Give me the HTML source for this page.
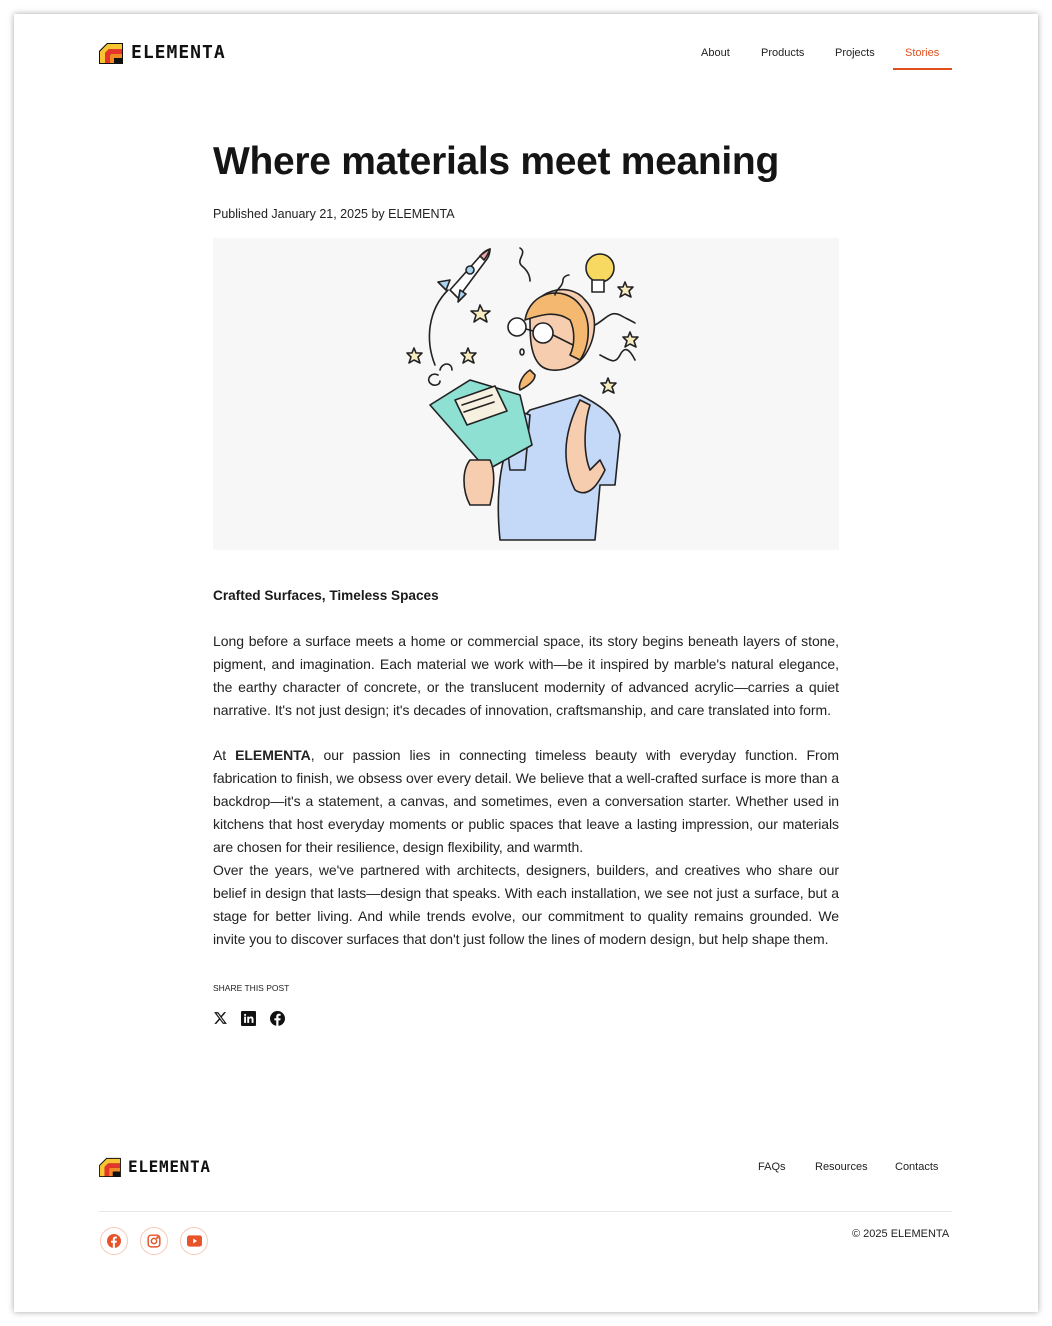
<!DOCTYPE html>
<html><head><meta charset="utf-8"><style>
*{margin:0;padding:0;box-sizing:border-box}
body{width:1052px;height:1326px;background:#fff;font-family:"Liberation Sans",sans-serif;color:#1a1a1a;position:relative;overflow:hidden}
.card{position:absolute;left:14px;top:14px;width:1024px;height:1298px;background:#fff;box-shadow:0 0 6px rgba(0,0,0,.35)}
.abs{position:absolute}
.nav a{position:absolute;font-size:11px;color:#222;text-decoration:none;top:47px}
.logotxt{font-family:"DejaVu Sans Mono","Liberation Mono",monospace;font-weight:bold;color:#111}
p.b{position:absolute;left:213px;width:626px;font-size:14px;letter-spacing:-0.05px;line-height:23px;text-align:justify;color:#222}
.fl{position:absolute;font-size:11px;color:#222;top:1161px}
.soc{position:absolute;top:1227px;width:28px;height:28px;border:1px solid #f6c9b8;border-radius:50%}
</style></head><body>
<div class="card"></div>
<svg class="abs" style="left:99px;top:42px" width="24" height="22" viewBox="0 0 24 22">
<path d="M0 22V9L8 1h16v21z" fill="#111"/>
<path d="M1 21V9.5L8.5 2H23v5H10L6 11v10z" fill="#f7c531"/>
<path d="M6 21V11l4-4h13v5H12l-1 1v8z" fill="#e5352a"/>
<path d="M11 21v-8l1-1h11v4h-8v5z" fill="#f08a24"/>
<rect x="16" y="16" width="7" height="5" fill="#111"/>
</svg>
<div class="abs logotxt" style="left:131px;top:42px;font-size:18px;letter-spacing:1px">ELEMENTA</div>
<div class="nav">
<a style="left:701px">About</a><a style="left:761px">Products</a><a style="left:835px">Projects</a><a style="left:905px;color:#e0501e">Stories</a>
</div>
<div class="abs" style="left:893px;top:68px;width:59px;height:2px;background:#e0501e"></div>
<h1 class="abs" style="left:213px;top:140px;font-size:39px;font-weight:bold;letter-spacing:-0.3px;color:#151515;white-space:nowrap">Where materials meet meaning</h1>
<div class="abs" style="left:213px;top:207px;font-size:12.5px;color:#222">Published January 21, 2025 by ELEMENTA</div>
<div class="abs" style="left:213px;top:238px;width:626px;height:312px;background:#f7f7f7"></div>
<svg class="abs" style="left:400px;top:240px" width="260" height="310" viewBox="0 0 260 310" fill="none" stroke="#222" stroke-width="1.6" stroke-linejoin="round" stroke-linecap="round">
<path d="M48 50C28 70 25 100 35 125"/>
<path d="M38 135c-6-3-12 3-8 8 4 4 10 2 10-2M40 130c2-8 12-8 12 0"/>
<path d="M50 50L82 14c4-4 8-5 8-5s0 6-3 10L58 58z" fill="#fff"/>
<path d="M80 16c4-4 8-6 10-7-1 3-3 7-6 11z" fill="#f4a7a7"/>
<circle cx="70" cy="30" r="4" fill="#a9d3f0"/>
<path d="M50 40l-12 2 8 8zM60 50l-2 12 8-8z" fill="#a9d3f0"/>
<path d="M100 300c-5-50 0-100 30-130l50-15c20 10 35 20 40 40l-5 50-15 0-5 55z" fill="#c4d8f7"/>
<path d="M115 170c-8 10-8 40-5 60l15 0 5-55z" fill="#c4d8f7"/>
<path d="M180 160c-15 30-20 60-5 90 15 10 25-10 30-20l-5-10-10 10c-8-20-5-50 0-65z" fill="#f7cdb0"/>
<path d="M130 80c0-30 40-40 55-20 15 15 10 40 0 55-10 15-35 20-45 10-10-10-10-30-10-45z" fill="#f7cdb0"/>
<path d="M125 80c5-30 40-35 55-15 12 15 10 40 0 55l-10-5c5-10 5-25 0-35-15-10-30-5-45 0z" fill="#f5b870"/>
<path d="M130 130c-8 5-12 15-10 20 10-5 15-10 15-15z" fill="#f5b870"/>
<circle cx="117" cy="87" r="9" fill="#fff"/><circle cx="143" cy="93" r="10" fill="#fff"/>
<path d="M126 89l7 2M153 95l20 10"/>
<ellipse cx="122" cy="112" rx="2" ry="3"/>
<path d="M30 165l40-25 50 15 12 50-45 25z" fill="#8de0d2"/>
<path d="M55 160l40-14 12 25-40 14z" fill="#f6f0e0"/>
<path d="M62 165l30-10M64 172l30-10"/>
<path d="M70 220c-8 10-8 30 0 45l20 0c5-20 5-35 0-45z" fill="#f7cdb0"/>
<g fill="#f7ecc0">
<path d="M80 65l3 6 7 0-5 4 2 7-7-4-6 4 2-7-5-4 7 0z"/>
<path d="M14 108l2 5 6 0-4 4 2 6-6-3-5 3 2-6-4-4 5 0z"/>
<path d="M68 108l2 5 6 0-4 4 2 6-6-3-5 3 2-6-4-4 5 0z"/>
<path d="M225 42l2 5 6 0-4 4 2 6-6-3-5 3 2-6-4-4 5 0z"/>
<path d="M230 92l2 5 6 0-4 4 2 6-6-3-5 3 2-6-4-4 5 0z"/>
<path d="M208 138l2 5 6 0-4 4 2 6-6-3-5 3 2-6-4-4 5 0z"/>
</g>
<circle cx="200" cy="28" r="14" fill="#f7d860"/>
<path d="M192 40h12v12h-12z" fill="#fff"/>
<path d="M120 8c8 5-5 12 2 18 6 5 8 10 8 15M155 55c0-5 8-8 8-15 0-3 4-5 6-5M195 85c10-5 15-15 25-10 5 3 10 5 15 8M200 115c10 5 15 10 20 0 5-10 10-5 15 5"/>
</svg>
<div class="abs" style="left:213px;top:588px;font-size:13.6px;font-weight:bold">Crafted Surfaces, Timeless Spaces</div>
<p class="b" style="top:630px">Long before a surface meets a home or commercial space, its story begins beneath layers of stone, pigment, and imagination. Each material we work with—be it inspired by marble's natural elegance, the earthy character of concrete, or the translucent modernity of advanced acrylic—carries a quiet narrative. It's not just design; it's decades of innovation, craftsmanship, and care translated into form.</p>
<p class="b" style="top:744px">At <b>ELEMENTA</b>, our passion lies in connecting timeless beauty with everyday function. From fabrication to finish, we obsess over every detail. We believe that a well-crafted surface is more than a backdrop—it's a statement, a canvas, and sometimes, even a conversation starter. Whether used in kitchens that host everyday moments or public spaces that leave a lasting impression, our materials are chosen for their resilience, design flexibility, and warmth.<br>Over the years, we've partnered with architects, designers, builders, and creatives who share our belief in design that lasts—design that speaks. With each installation, we see not just a surface, but a stage for better living. And while trends evolve, our commitment to quality remains grounded. We invite you to discover surfaces that don't just follow the lines of modern design, but help shape them.</p>
<div class="abs" style="left:213px;top:983px;font-size:8.5px;color:#222">SHARE THIS POST</div>
<svg class="abs" style="left:213px;top:1011px" width="15" height="14" viewBox="0 0 24 24"><path d="M18.2 2h3.4l-7.4 8.5L23 22h-6.8l-5.3-7-6.1 7H1.4l7.9-9L1 2h7l4.8 6.4zm-1.2 18h1.9L7.1 4H5.1z" fill="#111"/></svg>
<svg class="abs" style="left:241px;top:1011px" width="15" height="15" viewBox="0 0 24 24"><rect width="24" height="24" rx="2" fill="#111"/><path d="M5 9h3v10H5zM6.5 4.5a1.7 1.7 0 110 3.4 1.7 1.7 0 010-3.4zM10 9h3v1.4c.5-.9 1.6-1.6 3.2-1.6 3 0 3.8 2 3.8 4.6V19h-3v-5c0-1.3-.3-2.4-1.7-2.4S13 12.6 13 14v5h-3z" fill="#fff"/></svg>
<svg class="abs" style="left:270px;top:1011px" width="15" height="15" viewBox="0 0 24 24"><circle cx="12" cy="12" r="12" fill="#111"/><path d="M13.5 24v-9h3l.5-3.5h-3.5V9.3c0-1 .3-1.7 1.8-1.7H17V4.5c-.3 0-1.4-.1-2.6-.1-2.6 0-4.4 1.6-4.4 4.5v2.6H7V15h3v9z" fill="#fff"/></svg>
<svg class="abs" style="left:99px;top:1157px" width="22" height="20" viewBox="0 0 24 22">
<path d="M0 22V9L8 1h16v21z" fill="#111"/>
<path d="M1 21V9.5L8.5 2H23v5H10L6 11v10z" fill="#f7c531"/>
<path d="M6 21V11l4-4h13v5H12l-1 1v8z" fill="#e5352a"/>
<path d="M11 21v-8l1-1h11v4h-8v5z" fill="#f08a24"/>
<rect x="16" y="16" width="7" height="5" fill="#111"/>
</svg>
<div class="abs logotxt" style="left:128px;top:1157px;font-size:16px;letter-spacing:0.7px">ELEMENTA</div>
<a class="fl" style="left:758px">FAQs</a><a class="fl" style="left:815px">Resources</a><a class="fl" style="left:895px">Contacts</a>
<div class="abs" style="left:99px;top:1211px;width:853px;height:1px;background:#e6e6e6"></div>
<div class="soc" style="left:100px"><svg style="position:absolute;left:6px;top:6px" width="14" height="14" viewBox="0 0 24 24"><circle cx="12" cy="12" r="12" fill="#e8532a"/><path d="M13.5 24v-9h3l.5-3.5h-3.5V9.3c0-1 .3-1.7 1.8-1.7H17V4.5c-.3 0-1.4-.1-2.6-.1-2.6 0-4.4 1.6-4.4 4.5v2.6H7V15h3v9z" fill="#fff"/></svg></div>
<div class="soc" style="left:140px"><svg style="position:absolute;left:6px;top:6px" width="14" height="14" viewBox="0 0 24 24" fill="none" stroke="#e8532a" stroke-width="2.5"><rect x="2" y="2" width="20" height="20" rx="5"/><circle cx="12" cy="12" r="4.5"/><circle cx="18" cy="6" r="1" fill="#e8532a"/></svg></div>
<div class="soc" style="left:180px"><svg style="position:absolute;left:6px;top:7px" width="15" height="12" viewBox="0 0 24 18"><rect width="24" height="18" rx="4" fill="#e8532a"/><path d="M10 5l6 4-6 4z" fill="#fff"/></svg></div>
<div class="abs" style="left:852px;top:1228px;font-size:11px;color:#222">© 2025 ELEMENTA</div>
</body></html>
